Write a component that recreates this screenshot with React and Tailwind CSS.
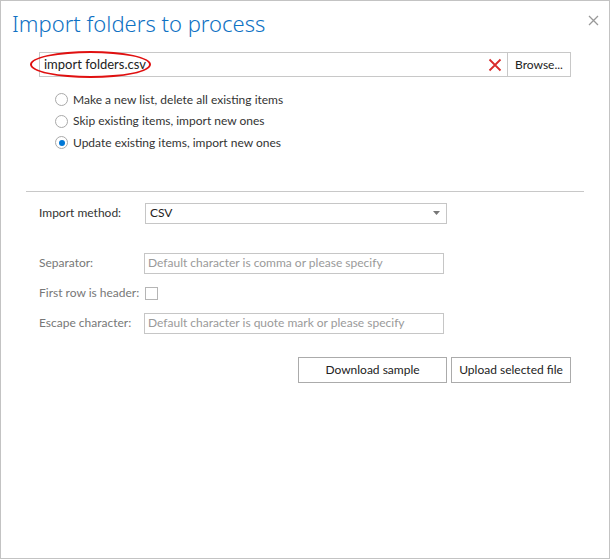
import React from 'react';

const font = { fontFamily: 'Lato, "Segoe UI", "Noto Sans", sans-serif' };
const titleFont = { fontFamily: '"Noto Sans", "Segoe UI", sans-serif' };

const Radio = ({ checked, label }) => (
  <label className="flex items-center h-[21.5px] text-[12px] text-[#333]">
    <span className="w-[13px] h-[13px] rounded-full border border-[#a9a9a9] bg-white flex items-center justify-center mr-[5px]">
      {checked && <span className="w-[6px] h-[6px] rounded-full bg-[#0078d7]" />}
    </span>
    {label}
  </label>
);

const FieldRow = ({ label, children, className = '' }) => (
  <div className={`flex items-center h-[21px] ${className}`}>
    <div className="w-[106px] text-[12px] text-[#777] whitespace-nowrap">{label}</div>
    {children}
  </div>
);

export default function App() {
  return (
    <div
      className="w-[610px] h-[559px] bg-white border border-[#c3c3c3] relative overflow-hidden"
      style={font}
    >
      {/* header */}
      <div className="flex items-start justify-between">
        <h1
          className="ml-[11px] mt-[8px] text-[22px] leading-[28px] font-light text-[#0f72c4]"
          style={titleFont}
        >
          Import folders to process
        </h1>
        <button className="mt-[14px] mr-[10px] text-[#999]">
          <svg width="11" height="11" viewBox="0 0 11 11" stroke="currentColor" strokeWidth="1.3">
            <path d="M1 1l9 9M10 1l-9 9" />
          </svg>
        </button>
      </div>

      {/* file picker */}
      <div className="ml-[38px] mr-[38px] mt-[15px] flex h-[25px] border border-[#c8c8c8] relative">
        <div className="flex-1 flex items-center pl-[4px] text-[13px] text-[#222]">
          import folders.csv
        </div>
        <div className="flex items-center pr-[5px]">
          <svg width="14" height="14" viewBox="0 0 14 14" stroke="#d92b2b" strokeWidth="1.8">
            <path d="M1.5 1.5l11 11M12.5 1.5l-11 11" />
          </svg>
        </div>
        <button className="w-[63px] border-l border-[#c8c8c8] text-[12px] text-[#222]">
          Browse...
        </button>
        {/* highlight ellipse */}
        <div className="absolute left-[-10px] top-[-2px] w-[121px] h-[27px] rounded-[50%] border-2 border-[#e01010] pointer-events-none" />
      </div>

      {/* radios */}
      <div className="ml-[54px] mt-[12px] flex flex-col">
        <Radio label="Make a new list, delete all existing items" />
        <Radio label="Skip existing items, import new ones" />
        <Radio checked label="Update existing items, import new ones" />
      </div>

      {/* divider */}
      <div className="ml-[25px] mr-[25px] mt-[37px] border-t border-[#c8c8c8]" />

      {/* import method */}
      <div className="ml-[38px] mt-[11px] flex items-center">
        <div className="w-[106px] text-[12px] text-[#333]">Import method:</div>
        <div className="w-[302px] h-[21px] border border-[#c6c6c6] flex items-center justify-between pl-[4px] pr-[6px] text-[12px] text-[#222]">
          <span>CSV</span>
          <svg width="7" height="4" viewBox="0 0 7 4">
            <path d="M0 0h7L3.5 4z" fill="#777" />
          </svg>
        </div>
      </div>

      {/* csv options */}
      <div className="ml-[38px] mt-[29px] flex flex-col gap-[9px]">
        <FieldRow label="Separator:">
          <div className="-ml-[1px] w-[300px] h-[21px] border border-[#c6c6c6] flex items-center pl-[3px] text-[12px] text-[#9a9a9a]">
            Default character is comma or please specify
          </div>
        </FieldRow>
        <FieldRow label="First row is header:">
          <span className="w-[13px] h-[13px] border border-[#b5b5b5] bg-white" />
        </FieldRow>
        <FieldRow label="Escape character:">
          <div className="-ml-[1px] w-[300px] h-[21px] border border-[#c6c6c6] flex items-center pl-[3px] text-[12px] text-[#9a9a9a]">
            Default character is quote mark or please specify
          </div>
        </FieldRow>
      </div>

      {/* actions */}
      <div className="mt-[23px] mr-[38px] flex justify-end gap-[4px]">
        <button className="w-[149px] h-[26px] border border-[#ababab] text-[12px] text-[#222] bg-white">
          Download sample
        </button>
        <button className="w-[120px] h-[26px] border border-[#ababab] text-[12px] text-[#222] bg-white">
          Upload selected file
        </button>
      </div>
    </div>
  );
}
